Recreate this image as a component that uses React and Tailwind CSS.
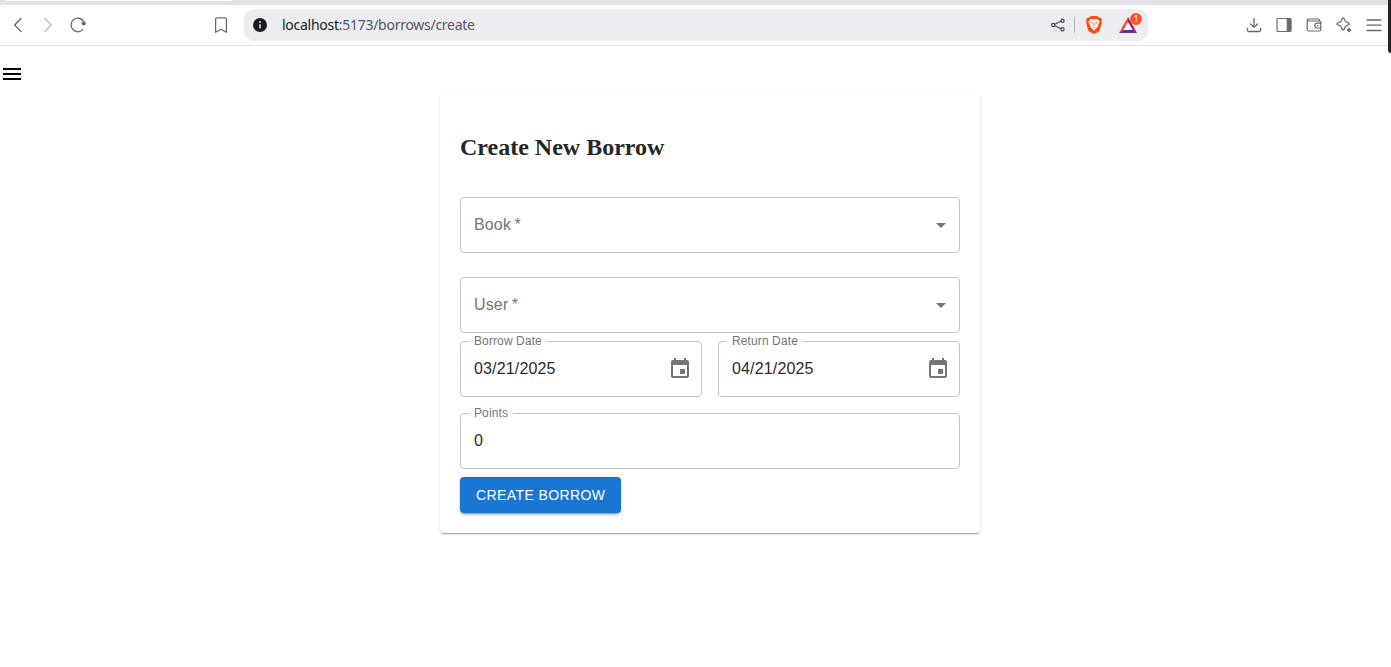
import React from "react";

function Slot({ children, className = "text-[#686a70]" }) {
  return (
    <span className={`flex h-8 w-[30px] shrink-0 items-center justify-center ${className}`}>
      {children}
    </span>
  );
}

function Icon({ children, size = 16, width = 1.2 }) {
  return (
    <svg
      width={size}
      height={size}
      viewBox="0 0 16 16"
      fill="none"
      stroke="currentColor"
      strokeWidth={width}
      strokeLinecap="round"
      strokeLinejoin="round"
    >
      {children}
    </svg>
  );
}

function BraveLion() {
  return (
    <svg width="16" height="18" viewBox="0 0 16 18">
      <path
        d="M4.8 0h6.4l1.500 1.600 1.500-.2L16 3.600l-.6 1.600.5 1.400-2 7.300q-.4 1.200-1.400 1.900L8 18l-4.500-2.200q-1-.7-1.400-1.900L.1 6.600l.5-1.400L0 3.600l1.800-2.200 1.500.2z"
        fill="#fb4f0b"
      />
      <path
        d="M4.600 2.900 6.200 3.300 8 2.900l1.800.4 1.600-.4 2.100 2.800-.5 1.900-1.600 2.300.3 1.200-2 1.500L8 14.700l-1.700-2.100-2-1.500.3-1.200L3 7.600l-.5-1.900z"
        fill="#fff"
      />
      <path
        d="M4.300 6.100 6.900 6.600 6.500 7.500 5.100 7.300zM11.700 6.100 9.100 6.600l.4.900 1.400-.2zM7.700 7h.6l.3 2.500-.6.500-.6-.5zM6 10.700l2 .8 2-.8-2 1.600z"
        fill="#fb4f0b"
      />
    </svg>
  );
}

function RewardsTriangle() {
  return (
    <svg width="18" height="16" viewBox="0 0 18 16">
      <path d="M9 0 0 16l4.400-2.700L9 5.200z" fill="#ff4724" />
      <path d="M9 0v5.200l4.600 8.100L18 16z" fill="#9e1f63" />
      <path d="M0 16h18l-4.400-2.900H4.400z" fill="#662d91" />
      <path d="M9 5.200 4.400 13.100h9.200z" fill="#fff" />
    </svg>
  );
}

function BrowserBar() {
  return (
    <header className="relative">
      <div className="h-[5px] bg-[#e2e1e6] pl-[6px]">
        <div className="h-px w-[226px] rounded-b-sm bg-white" />
      </div>
      <div className="flex h-[41px] items-center border-b border-[#e2e1e6] bg-white pl-[3px]">
        <Slot>
          <Icon width={1.4}>
            <path d="M11 1.500 4.700 8l6.300 6.500" />
          </Icon>
        </Slot>
        <Slot className="text-[#bdbdc1]">
          <Icon width={1.4}>
            <path d="M5 1.500 11.300 8 5 14.500" />
          </Icon>
        </Slot>
        <Slot>
          <Icon width={1.3}>
            <path d="M12.800 12.600A6.800 6.800 0 1 1 13.500 4.200" />
            <circle cx="13.700" cy="6.400" r="1.500" fill="currentColor" />
          </Icon>
        </Slot>
        <Slot className="ml-[113px] text-[#686a70]">
          <Icon width={1.3}>
            <path d="M2.600 15.200V2Q2.600.8 3.800.8h8.400q1.200 0 1.200 1.200v13.200L8 12.200z" />
          </Icon>
        </Slot>
        <div className="ml-2 flex h-8 w-[904px] shrink-0 items-center rounded-[10px] bg-[#ededf1] pl-[9px]">
          <svg width="14" height="14" viewBox="0 0 14 14">
            <circle cx="7" cy="7" r="7" fill="#1b1b21" />
            <path d="M7 6.200v4.200" stroke="#ededf1" strokeWidth="1.500" />
            <circle cx="7" cy="4" r=".9" fill="#ededf1" />
          </svg>
          <div className="ml-[15px] w-[761px] whitespace-nowrap font-['Noto_Sans',sans-serif] text-[14px] leading-5 tracking-[-0.27px] text-[#55555c]">
            <span className="text-[#1b1b21]">localhost</span>:5173/borrows/create
          </div>
          <span className="ml-[7px] text-[#4b4b52]">
            <Icon width={1.2}>
              <path d="m4.900 7.200 5.900-2.900M4.900 8.800l5.900 2.900" />
              <circle cx="3.200" cy="8" r="1.600" />
              <circle cx="12.500" cy="3.700" r="1.600" />
              <circle cx="12.500" cy="12.300" r="1.600" />
            </Icon>
          </span>
          <span className="ml-[8px] h-4 w-px bg-[#b4b4ba]" />
          <span className="ml-[11px]">
            <BraveLion />
          </span>
          <span className="relative ml-[17px]">
            <RewardsTriangle />
            <span className="absolute -top-[4px] left-[11px] flex h-3 w-3 items-center justify-center rounded-full bg-[#fb542b] font-['Noto_Sans',sans-serif] text-[8px] leading-none text-white">
              1
            </span>
          </span>
        </div>
        <div className="ml-[91px] flex">
          <Slot>
            <Icon width={1.3}>
              <path d="M8 1.500v8.500M4.500 7 8 10.300 11.500 7M1.300 11.300v1.700q0 1.500 1.500 1.500h10.400q1.500 0 1.500-1.500v-1.700" />
            </Icon>
          </Slot>
          <Slot>
            <Icon width={1.2}>
              <rect x="1" y="1.500" width="14" height="13" rx="1" />
              <path d="M11.300 2h3.200v12h-3.200z" fill="currentColor" />
            </Icon>
          </Slot>
          <Slot>
            <Icon width={1.2}>
              <path d="M1.200 4V12.500Q1.200 14 2.700 14h10.600q1.500 0 1.500-1.500v-7Q14.800 4 13.300 4H1.900Q1.200 4 1.200 3.100 1.200 2 2.500 2h9.700q1.300 0 1.300 1.300V4" />
              <path d="M14.800 6.200h-3.600a2.400 2.400 0 0 0 0 4.800h3.600M11.300 8.600h.7" />
            </Icon>
          </Slot>
          <Slot>
            <Icon width={1.3}>
              <path d="M7.200.8Q8 .8 8.400 2.300 9.100 5 11.700 5.700q1.600.5 1.600 1.200t-1.600 1.200Q9.100 8.900 8.400 11.500 8 13 7.200 13T6 11.500Q5.300 8.900 2.700 8.100 1 7.600 1 6.900t1.700-1.200Q5.300 5 6 2.300 6.400.8 7.200.8z" />
              <path d="M13 11.300v3.400M11.300 13h3.400" />
              <path d="M13 11 15 13 13 15 11 13z" fill="currentColor" stroke="none" />
            </Icon>
          </Slot>
          <Slot>
            <Icon width={1.3}>
              <path d="M1 3h14M1 8.200h14M1 13.500h14" />
            </Icon>
          </Slot>
        </div>
      </div>
      <div className="absolute right-0 top-0 h-[53px] w-[3px] rounded-bl-sm bg-[#242424]" />
    </header>
  );
}

const frame =
  "relative flex h-14 w-full items-center rounded border border-[#c4c4c4] pl-[13px] text-base leading-[23px] tracking-[0.15px]";

function SelectField({ label }) {
  return (
    <div className={`${frame} justify-between pr-[6px] text-[#757575]`}>
      <span className="-mt-px">{label}&thinsp;*</span>
      <svg width="24" height="24" viewBox="0 0 24 24" fill="#757575">
        <path d="m7 10 5 5 5-5z" />
      </svg>
    </div>
  );
}

function ValueField({ label, value, calendar = false }) {
  return (
    <div className={`${frame} justify-between pr-[9px] text-[#2a2a2a]`}>
      <span className="absolute -top-[8px] left-2 bg-white px-[5px] text-[12px] leading-[14px] tracking-[0.11px] text-[#757575]">
        {label}
      </span>
      <span className="-mt-px">{value}</span>
      {calendar && (
        <svg width="24" height="24" viewBox="0 0 24 24" fill="#757575">
          <path d="M17 12h-5v5h5v-5zM16 1v2H8V1H6v2H5c-1.110 0-1.990.9-1.990 2L3 19c0 1.100.89 2 2 2h14c1.100 0 2-.9 2-2V5c0-1.100-.9-2-2-2h-1V1h-2zm3 18H5V8h14v11z" />
        </svg>
      )}
    </div>
  );
}

export default function App() {
  return (
    <div className="h-[667px] overflow-hidden bg-white font-['Liberation_Sans',Arial,sans-serif]">
      <BrowserBar />
      <div className="flex items-start">
        <button className="mt-4 w-[440px] shrink-0" aria-label="Menu">
          <svg width="24" height="24" viewBox="0 0 24 24" fill="#000">
            <path d="M3 18h18v-2H3v2zm0-5h18v-2H3v2zm0-7v2h18V6H3z" />
          </svg>
        </button>
        <form className="mt-12 w-[540px] rounded p-5 shadow-[0px_2px_1px_-1px_rgba(0,0,0,0.2),0px_1px_1px_0px_rgba(0,0,0,0.14),0px_1px_3px_0px_rgba(0,0,0,0.12)]">
          <h2 className="mb-9 mt-5 font-['Liberation_Serif',serif] text-2xl font-bold leading-[27px] text-[#262626]">
            Create New Borrow
          </h2>
          <div className="flex flex-col gap-6">
            <SelectField label="Book" />
            <SelectField label="User" />
          </div>
          <div className="mt-2 grid grid-cols-2 gap-4">
            <ValueField label="Borrow Date" value="03/21/2025" calendar />
            <ValueField label="Return Date" value="04/21/2025" calendar />
          </div>
          <div className="mt-4">
            <ValueField label="Points" value="0" />
          </div>
          <button
            type="button"
            className="mt-2 block h-9 rounded bg-[#1976d2] px-4 text-sm leading-[24px] tracking-[0.4px] text-white shadow-[0px_3px_1px_-2px_rgba(0,0,0,0.2),0px_2px_2px_0px_rgba(0,0,0,0.14),0px_1px_5px_0px_rgba(0,0,0,0.12)]"
          >
            CREATE BORROW
          </button>
        </form>
      </div>
    </div>
  );
}
